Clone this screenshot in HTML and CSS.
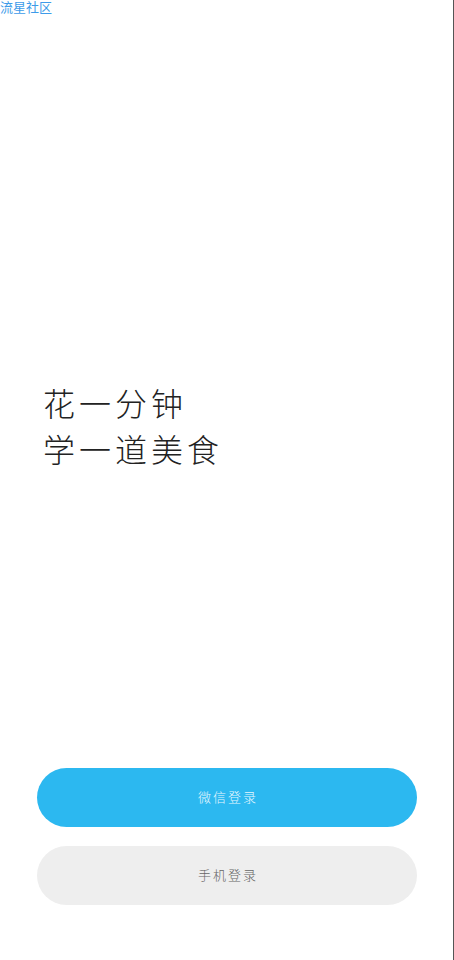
FILE: index.html
```html
<!DOCTYPE html>
<html lang="zh-CN">
<head>
<meta charset="utf-8">
<title>流星社区</title>
<link rel="stylesheet" href="styles.css">
</head>
<body>
<div class="page">
  <a class="brand" href="#">流星社区</a>
  <main class="slogan">
    <p class="slogan-line">花一分钟</p>
    <p class="slogan-line">学一道美食</p>
  </main>
  <div class="actions">
    <button class="btn btn-primary" type="button">微信登录</button>
    <button class="btn btn-secondary" type="button">手机登录</button>
  </div>
</div>
</body>
</html>
```

FILE: styles.css
```css
* { box-sizing: border-box; }
html, body { margin: 0; padding: 0; background: #fff; }
body { font-family: "Noto Sans CJK SC", "Noto Sans", sans-serif; }
.page {
  width: 454px;
  height: 960px;
  border-right: 1px solid #555;
  display: flex;
  flex-direction: column;
  overflow: hidden;
}
.brand {
  display: block;
  font-family: "Liberation Sans", "Noto Sans CJK SC", sans-serif;
  font-size: 13px;
  line-height: 15px;
  height: 15px;
  color: #3d9be9;
  text-decoration: none;
}
.slogan { padding: 364px 0 0 43px; }
.slogan-line {
  margin: 0;
  font-size: 32px;
  font-weight: 300;
  line-height: 46px;
  letter-spacing: 4px;
  color: #222;
  white-space: nowrap;
}
.actions {
  margin-top: 297px;
  padding-left: 37px;
  display: flex;
  flex-direction: column;
  gap: 19px;
}
.btn {
  width: 380px;
  height: 59px;
  border: 0;
  border-radius: 30px;
  padding: 0 0 2px 2px;
  font-family: inherit;
  font-size: 13px;
  font-weight: 300;
  letter-spacing: 2px;
  text-align: center;
}
.btn-primary { background: #2cb8f0; color: #e6f7ff; }
.btn-secondary { background: #eeeeee; color: #666; }
```
